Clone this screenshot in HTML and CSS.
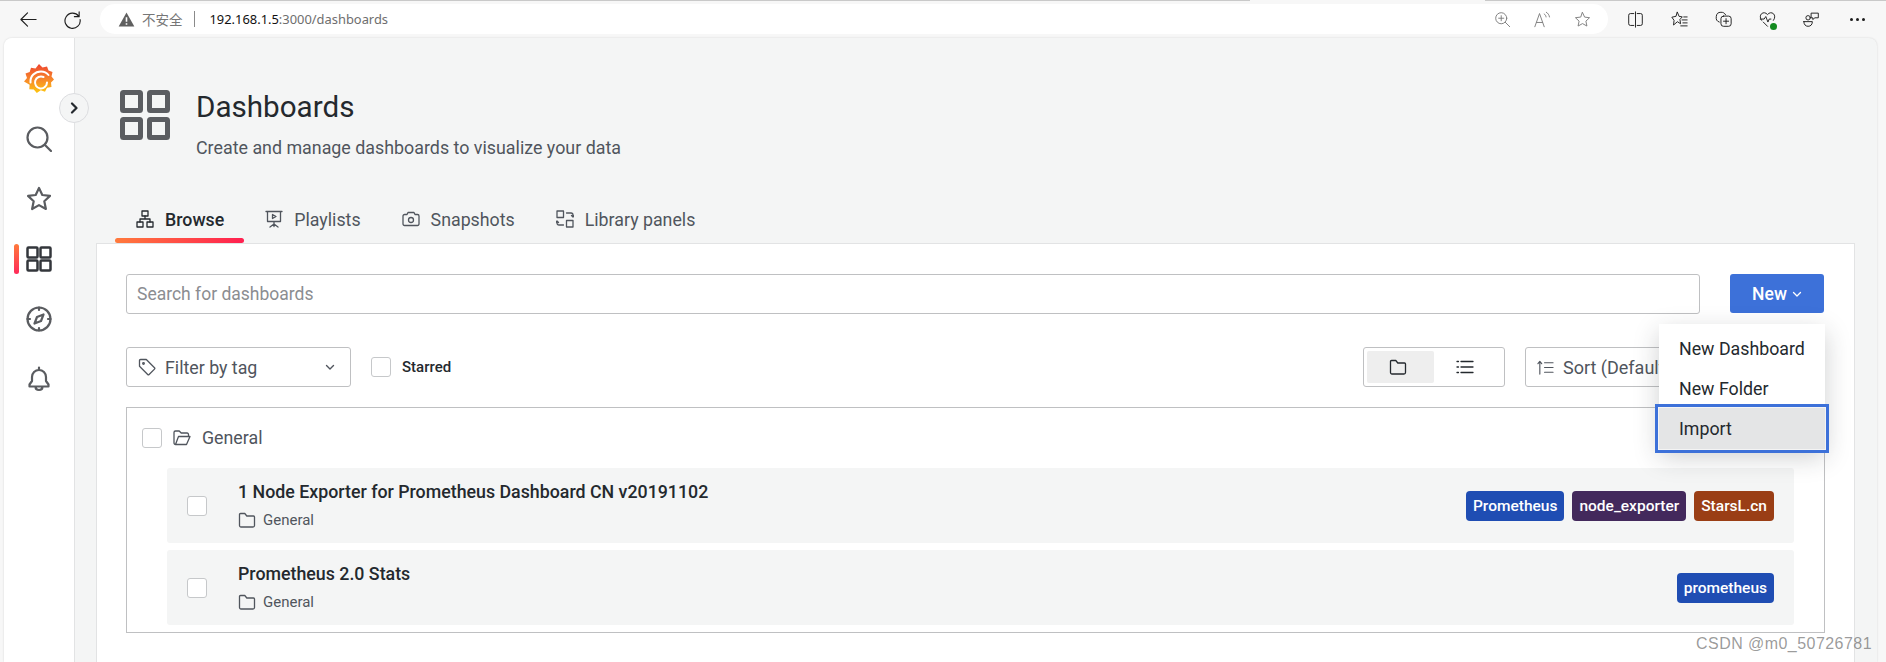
FILE: index.html
```html
<!DOCTYPE html>
<html lang="en">
<head>
    <meta charset="UTF-8">
    <title>Dashboards</title>
    <link rel="stylesheet" href="styles.css">
</head>
<body>
    <header class="browser-bar">
        <svg class="ico chrome-btn" viewBox="0 0 20 20"><path d="M18 10H2M9 3l-7 7 7 7"/></svg>
        <svg class="ico chrome-btn reload" viewBox="0 0 20 20"><path d="M16.5 6.5A8 8 0 1 0 18 10M17 2v5h-5"/></svg>
        <div class="address">
            <svg class="warn" viewBox="0 0 18 18"><path d="M9 1.5 17.3 16.5H.7z"/><path class="warn-mark" d="M9 6.5v5M9 13v1.5"/></svg>
            <span class="not-safe">不安全</span>
            <span class="addr-sep"></span>
            <span class="url"><b>192.168.1.5</b>:3000/dashboards</span>
            <span class="addr-icons">
                <svg class="ico addr-ico" viewBox="0 0 20 20"><circle cx="8.5" cy="8.5" r="6.5"/><path d="M8.5 5.5v6M5.5 8.5h6M13.3 13.3l5.2 5.2"/></svg>
                <svg class="ico addr-ico" viewBox="0 0 20 20"><path d="M1 18.500 6.500 3l5.500 15.500M2.900 13.500h7.200M12 3.500c1.300.8 2 2 2.200 3.500M14.500 1.500c2 1.200 3.300 3 3.700 5.500"/></svg>
                <svg class="ico addr-ico" viewBox="0 0 20 20"><path d="M10 1.800l2.500 5.400 5.800.7-4.300 4 1.200 5.800-5.200-2.900-5.200 2.900L6 11.900l-4.300-4 5.800-.7z"/></svg>
            </span>
        </div>
        <div class="chrome-tools">
            <svg class="ico tool" viewBox="0 0 20 20"><path d="M8 3H4a2 2 0 0 0-2 2v10a2 2 0 0 0 2 2h4M12 3h4a2 2 0 0 1 2 2v10a2 2 0 0 1-2 2h-4M10 1v18"/></svg>
            <svg class="ico tool" viewBox="0 0 20 20"><path d="M7.500 1.500l2 4.800 3.800.6-2.800 3 .8 5.100-3.800-2.400-4.500 3.900.6-5.500L1 7.300l4.500-1zM13 10.500h6M14 14h5M11.500 17.500H19M15 7h4"/></svg>
            <svg class="ico tool" viewBox="0 0 20 20"><path d="M5 13C2 12 1 10 1.500 6.500 1.900 3 3.500 1.500 7 1.500c2.500 0 4 .5 5.500 3"/><rect x="7" y="6" width="12" height="12" rx="3"/><path d="M13 9v6M10 12h6"/></svg>
            <span class="health">
                <svg class="ico tool" viewBox="0 0 20 20"><path d="M3 11C1 8.500 1 5 3 3.200c2-1.800 5-1.500 7 1 2-2.500 5-2.800 7-1 2 1.800 2 5.300 0 7.800M1.500 9.500H6l2-3 2.500 6.500 1.500-3.500h2M5 13l5 5"/></svg>
                <i class="health-dot"></i>
            </span>
            <svg class="ico tool" viewBox="0 0 20 20"><circle cx="6" cy="8" r="2.600"/><path d="M1 12.500h10c0 3.500-2 5.500-5 5.500s-5-2-5-5.500zM10 2.500h8v5.500h-4l-2.500 2V8H10z"/></svg>
            <span class="more"><i></i><i></i><i></i></span>
        </div>
    </header>

    <div class="app">
        <nav class="sidebar">
            <svg class="logo" viewBox="0 0 30 30">
                <defs>
                    <linearGradient id="logoFill" x1="0" y1="1" x2="0" y2="0">
                        <stop offset="0" stop-color="#fdc60f"/>
                        <stop offset="0.45" stop-color="#f7892a"/>
                        <stop offset="1" stop-color="#ee4430"/>
                    </linearGradient>
                </defs>
                <path fill="url(#logoFill)" d="M15 0l3.500 3.500 4.500-1 1.500 4 4 1.500-1 4.500 2.500 3-3 3 .5 4.500-4.500.8-2 4-4.200-1.500-4 2.700-3-3.500-4.500-.3.300-4.500L0 17.500l3-3.500-1.500-4.500 4.200-1.500 1.300-4.300 4.500.8z"/>
                <path class="logo-swirl" d="M6.500 18.500C6 12 11 7.500 17 7.500c3 0 5.500 1 7.500 3.500M23 18.500a6 6 0 1 1-3.500-5.500M23 18.500c0 2-1 3.500-2.500 4.500"/>
            </svg>
            <a class="side-link">
                <svg class="ico side-ico" viewBox="0 0 26 26"><circle cx="11.500" cy="11.500" r="10"/><path d="M19 19l6 6"/></svg>
            </a>
            <a class="side-link">
                <svg class="ico side-ico" viewBox="0 0 26 26"><path d="M13 2l3.300 7 7.700.9-5.700 5.300 1.600 7.800-6.900-3.900L6.100 23l1.600-7.800L2 9.900 9.700 9z"/></svg>
            </a>
            <a class="side-link active">
                <svg class="ico side-ico" viewBox="0 0 26 26"><rect x="1.500" y="1.500" width="10" height="10" rx="1"/><rect x="14.500" y="1.500" width="10" height="10" rx="1"/><rect x="1.500" y="14.500" width="10" height="10" rx="1"/><rect x="14.500" y="14.500" width="10" height="10" rx="1"/></svg>
            </a>
            <a class="side-link">
                <svg class="ico side-ico" viewBox="0 0 26 26"><circle cx="13" cy="13" r="11.500"/><path d="M17.500 8.500l-2.500 6.500-6.500 2.500 2.500-6.500zM13 1.500v2.500M13 22v2.500M1.500 13H4M22 13h2.500"/></svg>
            </a>
            <a class="side-link">
                <svg class="ico side-ico" viewBox="0 0 26 26"><path d="M13 1.500v2.500M6 15V11a7 7 0 0 1 14 0v4l2.500 3.500v2h-19v-2zM9.500 20.500c0 2.500 1.500 3.500 3.500 3.500s3.500-1 3.500-3.500"/></svg>
            </a>
        </nav>

        <button class="expand">
            <svg class="ico expand-ico" viewBox="0 0 12 12"><path d="M4 1.500 8.500 6 4 10.500"/></svg>
        </button>

        <main class="content">
            <div class="page-head">
                <svg class="ico head-ico" viewBox="0 0 50 50"><rect x="2.500" y="2.500" width="18" height="18" rx="1"/><rect x="29.500" y="2.500" width="18" height="18" rx="1"/><rect x="2.500" y="29.500" width="18" height="18" rx="1"/><rect x="29.500" y="29.500" width="18" height="18" rx="1"/></svg>
                <div>
                    <h1 class="page-title">Dashboards</h1>
                    <p class="page-sub">Create and manage dashboards to visualize your data</p>
                </div>
            </div>

            <div class="tabs">
                <a class="tab active">
                    <svg class="ico tab-ico" viewBox="0 0 18 18"><rect x="6" y="1" width="6" height="5"/><rect x="1" y="12" width="6" height="5"/><rect x="11" y="12" width="6" height="5"/><path d="M9 6v3M4 12V9h10v3"/></svg>
                    Browse
                </a>
                <a class="tab">
                    <svg class="ico tab-ico" viewBox="0 0 18 18"><path d="M1 1.500h16M2.500 1.500v10h13v-10M9 11.500v5M5 17l4-3 4 3"/><path d="M7.500 4.500v4l3.500-2z"/></svg>
                    Playlists
                </a>
                <a class="tab">
                    <svg class="ico tab-ico" viewBox="0 0 18 18"><path d="M1 6a1.500 1.500 0 0 1 1.500-1.500H5l1-2h6l1 2h2.500A1.500 1.500 0 0 1 17 6v8a1.500 1.500 0 0 1-1.500 1.500h-13A1.500 1.500 0 0 1 1 14z"/><circle cx="9" cy="10" r="2.500"/></svg>
                    Snapshots
                </a>
                <a class="tab">
                    <svg class="ico tab-ico" viewBox="0 0 18 18"><rect x="1" y="1" width="6.500" height="6.500"/><rect x="10.500" y="10.500" width="6.500" height="6.500"/><path d="M10.500 3H15c1.200 0 2 .8 2 2v1.500M15.500 5.500 17 7l1-1.200M7.500 15H3c-1.200 0-2-.8-2-2v-1.500M2.500 12.500 1 11l-1 1.200"/></svg>
                    Library panels
                </a>
            </div>

            <section class="panel">
                <div class="search-row">
                    <div class="input search-input">Search for dashboards</div>
                    <div class="new-wrap">
                        <button class="new-btn">New
                            <svg class="ico new-caret" viewBox="0 0 10 10"><path d="M1.500 3.500 5 7l3.500-3.500"/></svg>
                        </button>
                        <div class="new-menu">
                            <a class="menu-item">New Dashboard</a>
                            <a class="menu-item">New Folder</a>
                            <a class="menu-item focused">Import</a>
                        </div>
                    </div>
                </div>

                <div class="toolbar">
                    <div class="input filter-tag">
                        <svg class="ico filter-ico" viewBox="0 0 18 18"><path d="M1.500 2.500a1 1 0 0 1 1-1h5.800l8.200 8.200a1 1 0 0 1 0 1.400l-5.400 5.400a1 1 0 0 1-1.400 0L1.500 8.300z"/><circle cx="5.500" cy="5.500" r=".8"/></svg>
                        <span class="filter-label">Filter by tag</span>
                        <svg class="ico filter-caret" viewBox="0 0 10 10"><path d="M1.500 3.500 5 7l3.500-3.500"/></svg>
                    </div>
                    <label class="starred"><span class="check"></span>Starred</label>
                    <div class="layout-switch">
                        <span class="layout-opt selected">
                            <svg class="ico layout-ico" viewBox="0 0 18 18"><path d="M1.500 3.500a1 1 0 0 1 1-1h4.300l2 2.500h6.700a1 1 0 0 1 1 1v8.500a1.500 1.500 0 0 1-1.500 1.500H3a1.500 1.500 0 0 1-1.500-1.500z"/></svg>
                        </span>
                        <span class="layout-opt">
                            <svg class="ico layout-ico" viewBox="0 0 18 18"><path d="M5 3.500h12M5 9h12M5 14.500h12M1 3.500h1.500M1 9h1.500M1 14.500h1.500"/></svg>
                        </span>
                    </div>
                    <div class="input sort-box">
                        <svg class="ico sort-ico" viewBox="0 0 18 18"><path d="M3 16V3M1 5l2-2.500L5 5M8 4h9M8 9h9M8 14h9"/></svg>
                        Sort (Default A-Z)
                    </div>
                </div>

                <div class="folder-box">
                    <div class="folder-head">
                        <span class="check"></span>
                        <svg class="ico folder-open" viewBox="0 0 18 18"><path d="M2.500 15.500A1.500 1.500 0 0 1 1 14V3.500A1.500 1.500 0 0 1 2.500 2h3.700l2 2h6A1.500 1.500 0 0 1 15.500 5.500V7.500M2.500 15.500H13.500l3.500-8H5.500z"/></svg>
                        <span class="folder-name">General</span>
                    </div>

                    <div class="dash-row">
                        <span class="check"></span>
                        <div class="dash-text">
                            <div class="dash-title">1 Node Exporter for Prometheus Dashboard CN v20191102</div>
                            <div class="dash-folder">
                                <svg class="ico dash-folder-ico" viewBox="0 0 18 18"><path d="M1.500 3.500a1 1 0 0 1 1-1h4.300l2 2.500h6.700a1 1 0 0 1 1 1v8.500a1.500 1.500 0 0 1-1.500 1.500H3a1.500 1.500 0 0 1-1.500-1.500z"/></svg>
                                General
                            </div>
                        </div>
                        <div class="tags">
                            <span class="tag tag-blue">Prometheus</span>
                            <span class="tag tag-purple">node_exporter</span>
                            <span class="tag tag-rust">StarsL.cn</span>
                        </div>
                    </div>

                    <div class="dash-row">
                        <span class="check"></span>
                        <div class="dash-text">
                            <div class="dash-title">Prometheus 2.0 Stats</div>
                            <div class="dash-folder">
                                <svg class="ico dash-folder-ico" viewBox="0 0 18 18"><path d="M1.500 3.500a1 1 0 0 1 1-1h4.300l2 2.500h6.700a1 1 0 0 1 1 1v8.500a1.500 1.500 0 0 1-1.500 1.500H3a1.500 1.500 0 0 1-1.500-1.500z"/></svg>
                                General
                            </div>
                        </div>
                        <div class="tags">
                            <span class="tag tag-blue">prometheus</span>
                        </div>
                    </div>
                </div>
            </section>
        </main>
    </div>

    <div class="watermark">CSDN @m0_50726781</div>
</body>
</html>
```

FILE: styles.css
```css
/* page */
:root {
    --text: #24292e;
    --text-soft: #50555d;
    --border: #bfc0c2;
    --blue: #3d71d9;
    --page-bg: #f4f5f5;
}

* {
    box-sizing: border-box;
}

html, body {
    height: 100%;
}

body {
    margin: 0;
    height: 662px;
    overflow: hidden;
    display: flex;
    flex-direction: column;
    background: #f7f7f7;
    color: var(--text);
    font-family: Roboto, "Liberation Sans", sans-serif;
    font-size: 17.8px;
}

.ico {
    fill: none;
    stroke: currentColor;
    stroke-width: 1.5;
    stroke-linecap: round;
    stroke-linejoin: round;
    flex-shrink: 0;
}

/* browser bar */
.browser-bar {
    height: 38px;
    flex-shrink: 0;
    display: flex;
    align-items: center;
    padding: 0 0 0 19px;
    background: linear-gradient(90deg, #c9c9c9 1250px, transparent 1250px, transparent 1485px, #c9c9c9 1485px) top / 100% 1px no-repeat;
}

.chrome-btn {
    width: 19px;
    height: 19px;
    color: #1f1f1f;
    stroke-width: 1.2;
}

.chrome-btn.reload {
    margin-left: 25px;
    margin-right: 18px;
}

.address {
    width: 1508px;
    height: 30px;
    border-radius: 15px;
    background: #fff;
    display: flex;
    align-items: center;
    padding-left: 18px;
    font-family: "Noto Sans", "Noto Sans CJK SC", sans-serif;
    font-size: 12.9px;
    color: #6e6e6e;
}

.warn {
    width: 17px;
    height: 17px;
    fill: #5f5f5f;
}

.warn-mark {
    fill: none;
    stroke: #fff;
    stroke-width: 1.7;
}

.not-safe {
    margin-left: 7px;
    font-size: 13.5px;
    color: #767676;
}

.addr-sep {
    width: 1px;
    height: 16px;
    margin: 0 15px 0 11px;
    background: #8a8a8a;
}

.url {
    color: #6e6e6e;
}

.url b {
    font-weight: 400;
    color: #111;
}

.addr-icons {
    margin-left: auto;
    margin-right: 17px;
    display: flex;
    gap: 23px;
}

.addr-ico {
    width: 17px;
    height: 17px;
    color: #7c7c7c;
    stroke-width: 1.1;
}

.chrome-tools {
    display: flex;
    align-items: center;
    gap: 27px;
    margin-left: 19px;
}

.tool {
    width: 17px;
    height: 17px;
    color: #1c1c1c;
    stroke-width: 1.1;
    display: block;
}

.health {
    position: relative;
}

.health-dot {
    position: absolute;
    right: -1px;
    bottom: -2px;
    width: 7px;
    height: 7px;
    border-radius: 50%;
    background: #128a1f;
}

.more {
    display: flex;
    gap: 3px;
    margin-left: 3px;
}

.more i {
    width: 3px;
    height: 3px;
    border-radius: 50%;
    background: #1c1c1c;
}

/* app frame */
.app {
    flex: 1;
    display: flex;
    position: relative;
    margin: 0 9px 0 4px;
    background: var(--page-bg);
    border-radius: 8px 8px 0 0;
    box-shadow: 0 0 2px rgba(0, 0, 0, 0.15);
    overflow: hidden;
}

.sidebar {
    width: 71px;
    flex-shrink: 0;
    background: #fff;
    border-right: 1px solid #e2e3e4;
    display: flex;
    flex-direction: column;
    align-items: center;
    padding-top: 26px;
}

.logo {
    width: 30px;
    height: 30px;
    margin-bottom: 15px;
}

.logo-swirl {
    fill: none;
    stroke: #fff;
    stroke-width: 2;
    stroke-linecap: round;
}

.side-link {
    position: relative;
    width: 100%;
    height: 60px;
    display: flex;
    align-items: center;
    justify-content: center;
    color: #5a5c60;
}

.side-link.active {
    color: #33363b;
}

.side-link.active::before {
    content: "";
    position: absolute;
    left: 10px;
    top: 15px;
    width: 5px;
    height: 30px;
    border-radius: 3px;
    background: linear-gradient(180deg, #ff7a3c, #ff2a5a);
}

.side-ico {
    width: 26px;
    height: 26px;
    stroke-width: 2.2;
}

.side-link.active .side-ico {
    stroke-width: 2.5;
}

.expand {
    position: absolute;
    left: 55px;
    top: 55px;
    width: 30px;
    height: 30px;
    padding: 0;
    border: 1px solid #dcdde0;
    border-radius: 50%;
    background: #f4f5f5;
    display: flex;
    align-items: center;
    justify-content: center;
    color: #24292e;
}

.expand-ico {
    width: 12px;
    height: 12px;
    stroke-width: 2.2;
}

/* main column */
.content {
    flex: 1;
    min-width: 0;
    display: flex;
    flex-direction: column;
}

.page-head {
    display: flex;
    gap: 26px;
    padding: 52px 0 0 45px;
    height: 162px;
}

.head-ico {
    width: 50px;
    height: 50px;
    color: #5b5d61;
    stroke-width: 5;
}

.page-title {
    margin: 0;
    font-size: 29.6px;
    font-weight: 400;
    line-height: 34px;
}

.page-sub {
    margin: 12px 0 0;
    font-size: 17.85px;
    line-height: 24px;
    color: var(--text-soft);
}

.tabs {
    display: flex;
    height: 43px;
    padding-left: 40px;
}

.tab {
    position: relative;
    display: flex;
    align-items: center;
    gap: 11px;
    padding: 0 20px 0 21px;
    height: 38px;
    font-size: 17.8px;
    color: var(--text-soft);
}

.tab.active {
    color: var(--text);
    font-weight: 500;
}

.tab.active::after {
    content: "";
    position: absolute;
    left: 0;
    right: 0;
    bottom: -5px;
    height: 5px;
    border-radius: 3px;
    background: linear-gradient(90deg, #ff7a3c, #ff2050);
}

.tab-ico {
    width: 18px;
    height: 18px;
    stroke-width: 1.3;
}

/* white panel */
.panel {
    flex: 1;
    margin: 0 22px 0 21px;
    padding: 30px 30px 0 29px;
    background: #fff;
    border: 1px solid #e2e3e4;
    border-bottom: 0;
}

.search-row {
    display: flex;
    gap: 30px;
}

.input {
    height: 40px;
    border: 1px solid var(--border);
    border-radius: 3px;
    background: #fff;
    display: flex;
    align-items: center;
    padding: 0 11px;
}

.search-input {
    flex: 1;
    font-size: 17.5px;
    padding-left: 10px;
    color: #8b8d91;
}

.new-wrap {
    position: relative;
}

.new-btn {
    width: 94px;
    height: 39px;
    padding-right: 6px;
    border: 0;
    border-radius: 3px;
    background: var(--blue);
    color: #fff;
    font: 500 17.5px Roboto, sans-serif;
    display: flex;
    align-items: center;
    justify-content: center;
    gap: 5px;
}

.new-caret {
    width: 10px;
    height: 10px;
    stroke-width: 1.3;
}

.new-menu {
    position: absolute;
    top: 50px;
    right: -1px;
    z-index: 5;
    width: 166px;
    padding-top: 4px;
    background: #fff;
    box-shadow: 0 8px 24px rgba(36, 41, 46, 0.22);
}

.menu-item {
    display: flex;
    align-items: center;
    height: 40px;
    padding-left: 20px;
}

.menu-item.focused {
    height: 41px;
    background: #e4e5e6;
    box-shadow: 0 0 0 1px #f4f4f4, 0 0 0 4px var(--blue);
}

.toolbar {
    display: flex;
    align-items: center;
    margin-top: 33px;
}

.filter-tag {
    width: 225px;
    color: var(--text-soft);
}

.filter-ico {
    width: 18px;
    height: 18px;
    stroke-width: 1.3;
}

.filter-label {
    margin-left: 9px;
}

.filter-caret {
    width: 10px;
    height: 10px;
    margin: 0 4px 0 auto;
    stroke-width: 1.4;
}

.check {
    width: 20px;
    height: 20px;
    flex-shrink: 0;
    border: 1px solid #c6c8ca;
    border-radius: 3px;
    background: #fff;
}

.starred {
    display: flex;
    align-items: center;
    gap: 11px;
    margin-left: 20px;
    font-size: 15px;
    font-weight: 500;
}

.layout-switch {
    width: 142px;
    height: 40px;
    margin-left: auto;
    padding: 3px;
    border: 1px solid var(--border);
    border-radius: 3px;
    display: flex;
}

.layout-opt {
    flex: 1;
    display: flex;
    align-items: center;
    justify-content: center;
    padding-right: 6px;
    border-radius: 2px;
}

.layout-opt.selected {
    background: #eeeeee;
}

.layout-ico {
    width: 18px;
    height: 18px;
    stroke-width: 1.3;
}

.sort-box {
    width: 299px;
    margin-left: 20px;
    gap: 9px;
    font-size: 18px;
    color: var(--text-soft);
}

.sort-ico {
    width: 17px;
    height: 17px;
    stroke-width: 1.2;
}

/* folder + rows */
.folder-box {
    margin-top: 20px;
    height: 226px;
    margin-right: -1px;
    padding: 19px 30px 0 40px;
    border: 1px solid var(--border);
}

.folder-head {
    display: flex;
    align-items: center;
    margin-left: -25px;
    margin-bottom: 20px;
    color: var(--text-soft);
}

.folder-open {
    width: 18px;
    height: 18px;
    margin-left: 11px;
    stroke-width: 1.3;
}

.folder-name {
    margin-left: 11px;
}

.dash-row {
    height: 75px;
    margin-bottom: 7px;
    padding: 0 20px;
    border-radius: 3px;
    background: var(--page-bg);
    display: flex;
    align-items: center;
}

.dash-text {
    margin-left: 31px;
    flex: 1;
    display: flex;
    flex-direction: column;
    gap: 9px;
}

.dash-title {
    font-weight: 500;
    line-height: 20px;
}

.dash-folder {
    display: flex;
    align-items: center;
    gap: 7px;
    font-size: 15px;
    line-height: 18px;
    color: var(--text-soft);
}

.dash-folder-ico {
    width: 18px;
    height: 18px;
    stroke-width: 1.3;
}

.tags {
    display: flex;
    gap: 8px;
}

.tag {
    height: 30px;
    padding: 0 7px;
    border-radius: 4px;
    display: flex;
    align-items: center;
    color: #fff;
    font-size: 15.5px;
    font-weight: 500;
}

.tag-blue {
    background: #1f4db3;
}

.tag-purple {
    background: #43295c;
}

.tag-rust {
    background: #9a3e15;
}

.watermark {
    position: absolute;
    left: 1696px;
    top: 634px;
    font-family: "Liberation Sans", sans-serif;
    font-size: 16px;
    line-height: 20px;
    letter-spacing: 0.45px;
    color: rgba(70, 70, 70, 0.55);
}
```
